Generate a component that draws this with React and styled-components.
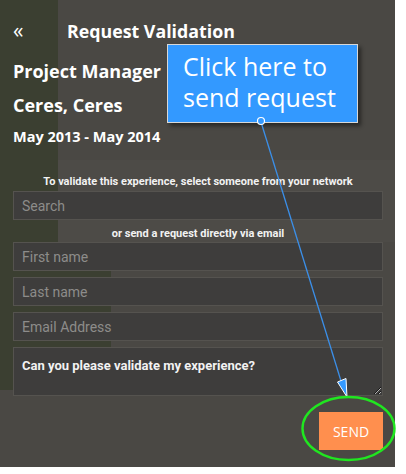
import styled, { createGlobalStyle } from "styled-components";

const Global = createGlobalStyle`
  html, body {
    margin: 0;
    background: #ffffff;
  }
  * {
    box-sizing: border-box;
  }
`;

const Stage = styled.div`
  position: relative;
  width: 406px;
  height: 474px;
`;

const Panel = styled.div`
  width: 395px;
  height: 467px;
  padding: 0 12px 0 13px;
  color: #ffffff;
  font-family: "Open Sans", "Liberation Sans", sans-serif;
  background:
    linear-gradient(#3b3f31, #3b3f31) 0 0 / 58px 242px no-repeat,
    linear-gradient(#3b3f31, #3b3f31) 0 242px / 111px 105px no-repeat,
    linear-gradient(#3b3f31, #3b3f31) 0 347px / 383px 43px no-repeat,
    linear-gradient(#4d4b47, #4d4b47) 58px 160px / 337px 82px no-repeat,
    #4a4844;
  display: flex;
  flex-direction: column;
`;

const Header = styled.div`
  display: flex;
  align-items: center;
  height: 24px;
  margin-top: 19px;
`;

const Back = styled.span`
  width: 54px;
  font-size: 21px;
  line-height: 24px;
  font-weight: 400;
  margin-top: -3px;
`;

const Title = styled.h1`
  margin: 0;
  font-size: 17.8px;
  font-weight: 700;
  line-height: 24px;
`;

const Heading = styled.div`
  font-size: ${(p) => p.$size}px;
  font-weight: 700;
  line-height: ${(p) => p.$lh}px;
  margin-top: ${(p) => p.$mt}px;
`;

const Note = styled.p`
  margin: ${(p) => p.$mt}px 0 0;
  text-align: center;
  font-family: Roboto, "Liberation Sans", sans-serif;
  font-size: 11px;
  font-weight: 700;
  line-height: 13px;
  color: #f2f2f2;
`;

const Field = styled.input`
  display: block;
  width: 100%;
  height: 29px;
  margin-top: ${(p) => p.$mt || 0}px;
  padding: 0 8px;
  background: #3e3d3c;
  border: 1px solid #55534f;
  color: #eeeeee;
  font-family: Roboto, "Liberation Sans", sans-serif;
  font-size: 14px;
  outline: none;
  &::placeholder {
    color: #8d8c8a;
  }
`;

const Message = styled.textarea`
  display: block;
  width: 100%;
  height: 49px;
  margin-top: 6px;
  padding: 10px 8px;
  background: #3e3d3c;
  border: 1px solid #55534f;
  color: #f2f2f2;
  font-family: Roboto, "Liberation Sans", sans-serif;
  font-size: 13px;
  font-weight: 700;
  outline: none;
`;

const Actions = styled.div`
  display: flex;
  justify-content: flex-end;
  margin-top: 16px;
`;

const SendButton = styled.button`
  width: 64px;
  height: 38px;
  border: none;
  background: #ff8f4e;
  color: #ffffff;
  font-family: "Open Sans", "Liberation Sans", sans-serif;
  font-size: 14px;
  font-weight: 400;
  padding: 0;
`;

const Callout = styled.div`
  position: absolute;
  left: 167px;
  top: 44px;
  width: 191px;
  height: 79px;
  padding: 6px 0 0 15px;
  background: #3399ff;
  border: 1px solid #d8d8d8;
  box-shadow: 3px 3px 4px rgba(0, 0, 0, 0.45);
  color: #ffffff;
  font-family: "Open Sans", "Liberation Sans", sans-serif;
  font-size: 25px;
  line-height: 31px;
`;

const Overlay = styled.svg`
  position: absolute;
  left: 0;
  top: 0;
  pointer-events: none;
`;

export default function App() {
  return (
    <Stage>
      <Global />
      <Panel>
        <Header>
          <Back>«</Back>
          <Title>Request Validation</Title>
        </Header>
        <Heading $size={18} $lh={26} $mt={15}>
          Project Manager
        </Heading>
        <Heading $size={18} $lh={26} $mt={8}>
          Ceres, Ceres
        </Heading>
        <Heading $size={14.5} $lh={20} $mt={9}>
          May 2013 - May 2014
        </Heading>
        <Note $mt={28}>To validate this experience, select someone from your network</Note>
        <Field $mt={3} placeholder="Search" />
        <Note $mt={7}>or send a request directly via email</Note>
        <Field $mt={2} placeholder="First name" />
        <Field $mt={6} placeholder="Last name" />
        <Field $mt={6} placeholder="Email Address" />
        <Message defaultValue="Can you please validate my experience?" />
        <Actions>
          <SendButton>SEND</SendButton>
        </Actions>
      </Panel>
      <Callout>
        Click here to
        <br />
        send request
      </Callout>
      <Overlay width="406" height="474" viewBox="0 0 406 474">
        <line x1="261" y1="122" x2="341" y2="381" stroke="#3b8fe8" strokeWidth="1.3" />
        <circle cx="261" cy="121" r="3.5" fill="#3399ff" stroke="#ffffff" strokeWidth="1.2" />
        <polygon
          points="337.5,382 346,378.5 347,397"
          fill="#3399ff"
          stroke="#ffffff"
          strokeWidth="1"
          strokeLinejoin="round"
        />
        <ellipse
          cx="348.5"
          cy="428.5"
          rx="46"
          ry="31.5"
          fill="none"
          stroke="#20e620"
          strokeWidth="2.4"
        />
      </Overlay>
    </Stage>
  );
}
